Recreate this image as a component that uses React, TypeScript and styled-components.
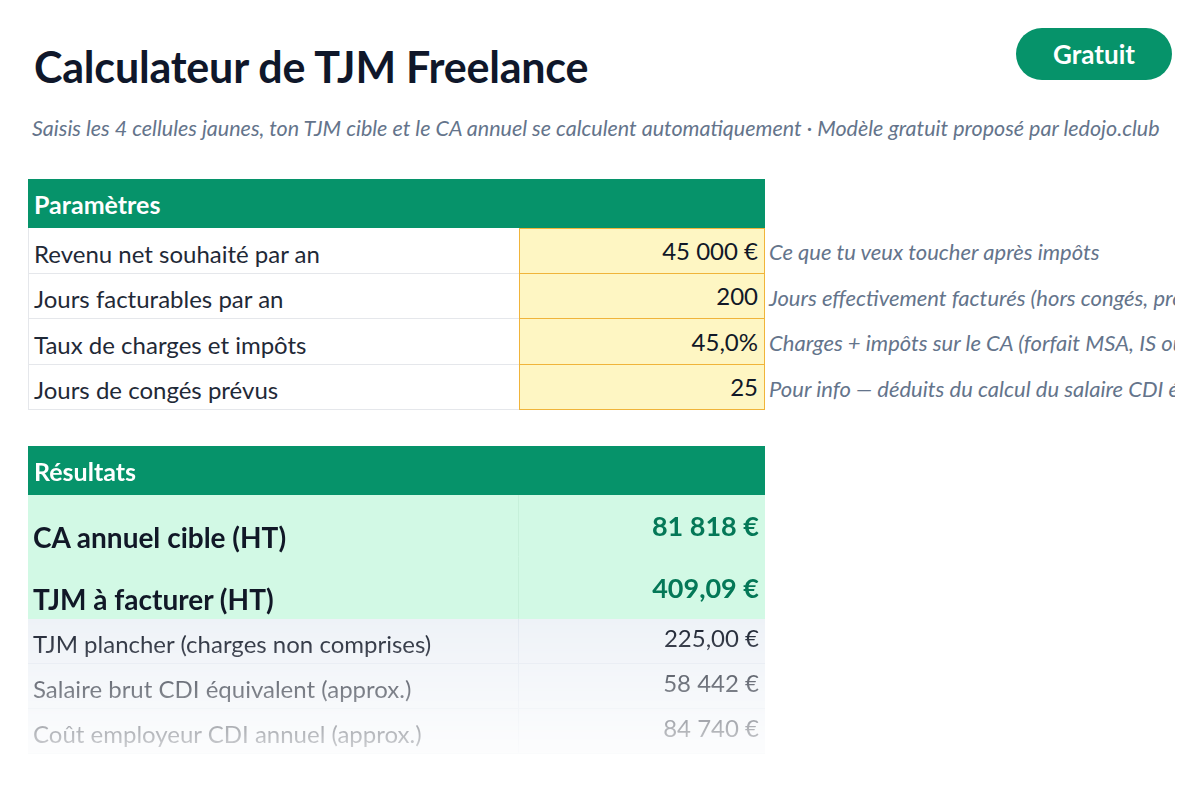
import { FC } from "react";
import styled, { createGlobalStyle } from "styled-components";

type Param = {
  label: string;
  value: string;
  note: string;
};

type Result = {
  label: string;
  value: string;
  big?: boolean;
};

const params: Param[] = [
  { label: "Revenu net souhaité par an", value: "45 000 €", note: "Ce que tu veux toucher après impôts" },
  { label: "Jours facturables par an", value: "200", note: "Jours effectivement facturés (hors congés, prospection, formation)" },
  { label: "Taux de charges et impôts", value: "45,0%", note: "Charges + impôts sur le CA (forfait MSA, IS ou micro selon ton statut)" },
  { label: "Jours de congés prévus", value: "25", note: "Pour info — déduits du calcul du salaire CDI équivalent" },
];

const results: Result[] = [
  { label: "CA annuel cible (HT)", value: "81 818 €", big: true },
  { label: "TJM à facturer (HT)", value: "409,09 €", big: true },
  { label: "TJM plancher (charges non comprises)", value: "225,00 €" },
  { label: "Salaire brut CDI équivalent (approx.)", value: "58 442 €" },
  { label: "Coût employeur CDI annuel (approx.)", value: "84 740 €" },
];

const App: FC = (): JSX.Element => {
  return (
    <>
      <GlobalStyle />
      <Page>
        <TopBar>
          <Title>Calculateur de TJM Freelance</Title>
          <Badge>Gratuit</Badge>
        </TopBar>
        <Subtitle>
          Saisis les 4 cellules jaunes, ton TJM cible et le CA annuel se calculent automatiquement · Modèle gratuit proposé par ledojo.club
        </Subtitle>

        <Sheet>
          <SectionHeader>Paramètres</SectionHeader>
          {params.map((p, i) => (
            <ParamRow key={p.label}>
              <LabelCell>{p.label}</LabelCell>
              <InputCell $first={i === 0}>{p.value}</InputCell>
              <Note>{p.note}</Note>
            </ParamRow>
          ))}
        </Sheet>

        <ResultSheet>
          <SectionHeader>Résultats</SectionHeader>
          {results.map((r) => (
            <ResultRow key={r.label} $big={r.big}>
              <ResultLabel $big={r.big}>{r.label}</ResultLabel>
              <ResultValue $big={r.big}>{r.value}</ResultValue>
            </ResultRow>
          ))}
        </ResultSheet>
      </Page>
    </>
  );
};

export default App;

const GlobalStyle = createGlobalStyle`
  body {
    margin: 0;
    background: #ffffff;
    font-family: Lato, "Noto Sans", sans-serif;
    color: #111827;
  }
`;

const Page = styled.div`
  width: 1147px;
  padding: 28px 0 40px 28px;
  overflow: hidden;
`;

const TopBar = styled.div`
  height: 64px;
  display: flex;
  justify-content: space-between;
  align-items: flex-start;
  padding-right: 3px;
`;

const Title = styled.h1`
  margin: 14px 0 0 6px;
  font-size: 43px;
  font-weight: 700;
  line-height: 50px;
  color: #0f172a;
  letter-spacing: -0.2px;
  white-space: nowrap;
`;

const Badge = styled.div`
  width: 156px;
  height: 52px;
  border-radius: 26px;
  background: #06936a;
  color: #ffffff;
  font-size: 26px;
  font-weight: 700;
  display: flex;
  align-items: center;
  justify-content: center;
`;

const Subtitle = styled.p`
  margin: 22px 0 0 4px;
  font-size: 21.5px;
  font-style: italic;
  color: #64748b;
  white-space: nowrap;
  line-height: 28px;
`;

const Sheet = styled.div`
  margin-top: 37px;
  display: flex;
  flex-direction: column;
`;

const SectionHeader = styled.div`
  width: 737px;
  height: 49px;
  box-sizing: border-box;
  background: #06936a;
  color: #ffffff;
  font-size: 25px;
  font-weight: 700;
  display: flex;
  align-items: center;
  padding-left: 6px;
`;

const ParamRow = styled.div`
  display: flex;
  height: 45.5px;
`;

const LabelCell = styled.div`
  width: 491px;
  flex: none;
  box-sizing: border-box;
  border-left: 1px solid #e5e7eb;
  border-bottom: 1px solid #e5e7eb;
  padding: 0 0 4px 5px;
  display: flex;
  align-items: flex-end;
  font-size: 24px;
  line-height: 1.2;
  color: #1f2937;
`;

const InputCell = styled.div<{ $first?: boolean }>`
  width: 246px;
  flex: none;
  box-sizing: border-box;
  background: #fef6c3;
  border: 1px solid #f0b43a;
  border-top-width: ${(p) => (p.$first ? "1px" : "0")};
  padding: 0 6px 7px 0;
  display: flex;
  align-items: flex-end;
  justify-content: flex-end;
  font-size: 24px;
  line-height: 1.2;
  color: #111827;
`;

const Note = styled.div`
  display: flex;
  align-items: center;
  padding: 2px 0 0 4px;
  font-size: 22px;
  font-style: italic;
  color: #64748b;
  white-space: nowrap;
`;

const ResultSheet = styled.div`
  margin-top: 36px;
  width: 737px;
  display: flex;
  flex-direction: column;
  -webkit-mask-image: linear-gradient(to bottom, #000 56%, rgba(0, 0, 0, 0.18) 100%);
  mask-image: linear-gradient(to bottom, #000 56%, rgba(0, 0, 0, 0.18) 100%);
`;

const ResultRow = styled.div<{ $big?: boolean }>`
  display: flex;
  height: ${(p) => (p.$big ? "62px" : "45px")};
  background: ${(p) => (p.$big ? "#d2f9e5" : "#eef2f7")};
`;

const ResultLabel = styled.div<{ $big?: boolean }>`
  width: 491px;
  flex: none;
  box-sizing: border-box;
  border-right: 1px solid ${(p) => (p.$big ? "#c6f0da" : "#e2e8f0")};
  border-bottom: 1px solid ${(p) => (p.$big ? "transparent" : "#e2e8f0")};
  display: flex;
  align-items: flex-end;
  padding: 0 0 ${(p) => (p.$big ? "1px" : "4px")} 5px;
  font-size: ${(p) => (p.$big ? "28px" : "24px")};
  line-height: 1.2;
  font-weight: ${(p) => (p.$big ? 700 : 400)};
  color: #111827;
  white-space: nowrap;
`;

const ResultValue = styled.div<{ $big?: boolean }>`
  flex: 1;
  box-sizing: border-box;
  border-bottom: 1px solid ${(p) => (p.$big ? "transparent" : "#e2e8f0")};
  display: flex;
  align-items: flex-end;
  justify-content: flex-end;
  padding: 0 6px ${(p) => (p.$big ? "14px" : "10px")} 0;
  font-size: ${(p) => (p.$big ? "27px" : "24px")};
  line-height: 1.2;
  font-weight: ${(p) => (p.$big ? 700 : 400)};
  color: ${(p) => (p.$big ? "#047857" : "#111827")};
`;
